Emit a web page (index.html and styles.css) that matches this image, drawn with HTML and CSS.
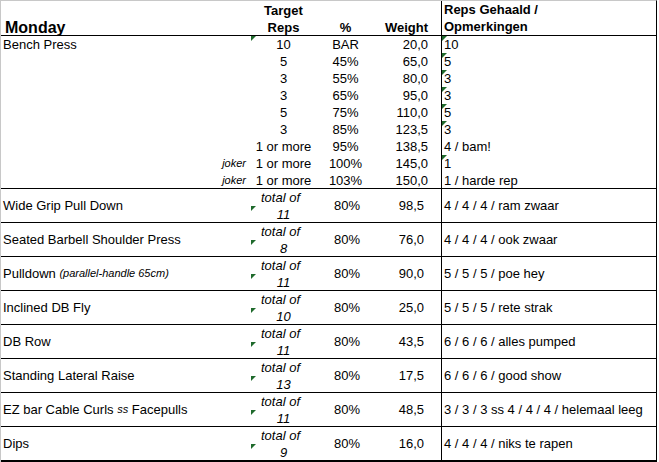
FILE: index.html
```html
<!DOCTYPE html>
<html>
<head>
<meta charset="utf-8">
<link rel="stylesheet" href="styles.css">
</head>
<body>
<div class="sheet">
  <div class="row head">
    <div class="cell a day">Monday</div>
    <div class="cell b hd">Target<br>Reps</div>
    <div class="cell c hd">%</div>
    <div class="cell d hd">Weight</div>
    <div class="cell e hd">Reps Gehaald /<br>Opmerkingen</div>
  </div>

  <div class="row bench">
    <div class="cell a">Bench Press</div><div class="cell b flag">10</div><div class="cell c">BAR</div><div class="cell d">20,0</div><div class="cell e flag">10</div>
    <div class="cell a"></div><div class="cell b">5</div><div class="cell c">45%</div><div class="cell d">65,0</div><div class="cell e flag">5</div>
    <div class="cell a"></div><div class="cell b">3</div><div class="cell c">55%</div><div class="cell d">80,0</div><div class="cell e flag">3</div>
    <div class="cell a"></div><div class="cell b">3</div><div class="cell c">65%</div><div class="cell d">95,0</div><div class="cell e flag">3</div>
    <div class="cell a"></div><div class="cell b">5</div><div class="cell c">75%</div><div class="cell d">110,0</div><div class="cell e flag">5</div>
    <div class="cell a"></div><div class="cell b">3</div><div class="cell c">85%</div><div class="cell d">123,5</div><div class="cell e flag">3</div>
    <div class="cell a"></div><div class="cell b">1 or more</div><div class="cell c">95%</div><div class="cell d">138,5</div><div class="cell e">4 / bam!</div>
    <div class="cell a joker">joker</div><div class="cell b">1 or more</div><div class="cell c">100%</div><div class="cell d">145,0</div><div class="cell e flag">1</div>
    <div class="cell a joker">joker</div><div class="cell b">1 or more</div><div class="cell c">103%</div><div class="cell d">150,0</div><div class="cell e">1 / harde rep</div>
  </div>

  <div class="row ex">
    <div class="cell a name">Wide Grip Pull Down</div>
    <div class="cell b t1">total of</div><div class="cell b t2 flag">11</div>
    <div class="cell c mid">80%</div><div class="cell d mid">98,5</div><div class="cell e mid">4 / 4 / 4 / ram zwaar</div>
  </div>
  <div class="row ex">
    <div class="cell a name">Seated Barbell Shoulder Press</div>
    <div class="cell b t1">total of</div><div class="cell b t2 flag">8</div>
    <div class="cell c mid">80%</div><div class="cell d mid">76,0</div><div class="cell e mid">4 / 4 / 4 / ook zwaar</div>
  </div>
  <div class="row ex">
    <div class="cell a name">Pulldown&nbsp;<span class="small">(parallel-handle 65cm)</span></div>
    <div class="cell b t1">total of</div><div class="cell b t2 flag">11</div>
    <div class="cell c mid">80%</div><div class="cell d mid">90,0</div><div class="cell e mid">5 / 5 / 5 / poe hey</div>
  </div>
  <div class="row ex">
    <div class="cell a name">Inclined DB Fly</div>
    <div class="cell b t1">total of</div><div class="cell b t2 flag">10</div>
    <div class="cell c mid">80%</div><div class="cell d mid">25,0</div><div class="cell e mid">5 / 5 / 5 / rete strak</div>
  </div>
  <div class="row ex">
    <div class="cell a name">DB Row</div>
    <div class="cell b t1">total of</div><div class="cell b t2 flag">11</div>
    <div class="cell c mid">80%</div><div class="cell d mid">43,5</div><div class="cell e mid">6 / 6 / 6 / alles pumped</div>
  </div>
  <div class="row ex">
    <div class="cell a name">Standing Lateral Raise</div>
    <div class="cell b t1">total of</div><div class="cell b t2 flag">13</div>
    <div class="cell c mid">80%</div><div class="cell d mid">17,5</div><div class="cell e mid">6 / 6 / 6 / good show</div>
  </div>
  <div class="row ex">
    <div class="cell a name">EZ bar Cable Curls&nbsp;<span class="small">ss</span>&nbsp;Facepulls</div>
    <div class="cell b t1">total of</div><div class="cell b t2 flag">11</div>
    <div class="cell c mid">80%</div><div class="cell d mid">48,5</div><div class="cell e mid">3 / 3 / 3 ss 4 / 4 / 4 / helemaal leeg</div>
  </div>
  <div class="row ex last">
    <div class="cell a name">Dips</div>
    <div class="cell b t1">total of</div><div class="cell b t2 flag">9</div>
    <div class="cell c mid">80%</div><div class="cell d mid">16,0</div><div class="cell e mid">4 / 4 / 4 / niks te rapen</div>
  </div>
</div>
</body>
</html>
```

FILE: styles.css
```css
body {
  margin: 0;
  background: #fff;
  font-family: "Liberation Sans", Arial, sans-serif;
  font-size: 13px;
  color: #000;
}

.sheet {
  width: 657px;
  box-sizing: border-box;
  border-top: 1px solid #c8c8c8;
  border-left: 1px solid #c8c8c8;
  border-right: 1px solid #000;
}

.row {
  display: grid;
  grid-template-columns: 249px 67px 57px 67px 1fr;
  border-bottom: 1px solid #000;
  box-sizing: border-box;
}

.cell {
  position: relative;
  line-height: 17px;
  white-space: nowrap;
}

.a { padding-left: 2px; }
.b, .c { text-align: center; }
.d { text-align: right; padding-right: 13px; }
.e { border-left: 1px solid #000; padding-left: 2px; }

/* header */
.head {
  height: 35px;
}
.head .cell {
  align-self: end;
  font-weight: bold;
}
.day {
  font-size: 16px;
  padding-left: 4px;
}
.head .e {
  align-self: stretch;
  display: flex;
  align-items: flex-end;
  padding-bottom: 1px;
}

/* bench block */
.bench {
  grid-template-rows: repeat(9, 17px);
  height: 153px;
}
.joker {
  text-align: right;
  padding-right: 4px;
  font-style: italic;
  font-size: 11px;
}

/* exercise blocks */
.ex {
  grid-template-rows: 17px 16px;
  height: 34px;
}
.ex.last {
  border-bottom-width: 2px;
  height: 35px;
}
.name {
  grid-column: 1;
  grid-row: 1 / span 2;
  display: flex;
  align-items: center;
}
.t1 {
  grid-column: 2;
  grid-row: 1;
  font-style: italic;
  padding-right: 6px;
}
.t2 {
  grid-column: 2;
  grid-row: 2;
  font-style: italic;
}
.mid {
  grid-row: 1 / span 2;
  display: flex;
  align-items: center;
}
.c.mid { grid-column: 3; justify-content: center; padding-left: 3px; }
.d.mid { grid-column: 4; justify-content: flex-end; padding-right: 17px; }
.e.mid { grid-column: 5; justify-content: flex-start; }

.small {
  font-size: 11px;
  font-style: italic;
}

/* excel "number stored as text" indicator */
.flag::before {
  content: "";
  position: absolute;
  left: 0;
  top: 0;
  border-top: 5px solid #1f6a2c;
  border-right: 5px solid transparent;
}
.b.flag::before { left: 1px; }
```
